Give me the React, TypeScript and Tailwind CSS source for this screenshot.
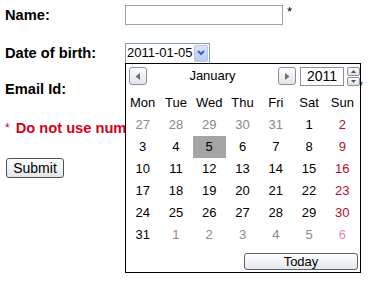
import React from "react";

const font = "font-['Liberation_Sans',Arial,sans-serif]";

type Day = { n: number; other?: boolean };

const weeks: Day[][] = [
  [{ n: 27, other: true }, { n: 28, other: true }, { n: 29, other: true }, { n: 30, other: true }, { n: 31, other: true }, { n: 1 }, { n: 2 }],
  [{ n: 3 }, { n: 4 }, { n: 5 }, { n: 6 }, { n: 7 }, { n: 8 }, { n: 9 }],
  [{ n: 10 }, { n: 11 }, { n: 12 }, { n: 13 }, { n: 14 }, { n: 15 }, { n: 16 }],
  [{ n: 17 }, { n: 18 }, { n: 19 }, { n: 20 }, { n: 21 }, { n: 22 }, { n: 23 }],
  [{ n: 24 }, { n: 25 }, { n: 26 }, { n: 27 }, { n: 28 }, { n: 29 }, { n: 30 }],
  [{ n: 31 }, { n: 1, other: true }, { n: 2, other: true }, { n: 3, other: true }, { n: 4, other: true }, { n: 5, other: true }, { n: 6, other: true }],
];

const dayNames = ["Mon", "Tue", "Wed", "Thu", "Fri", "Sat", "Sun"];

function NavButton({ dir }: { dir: "left" | "right" }) {
  return (
    <button className="h-[18px] w-[18px] rounded-[3px] border border-[#8a8f98] bg-gradient-to-b from-[#fbfcfd] to-[#e1e6ec] grid place-items-center">
      <svg width="6" height="7" viewBox="0 0 6 7">
        {dir === "left" ? <path d="M5 0 L5 7 L0.5 3.5 Z" fill="#6b6f75" /> : <path d="M1 0 L1 7 L5.5 3.5 Z" fill="#6b6f75" />}
      </svg>
    </button>
  );
}

function Calendar() {
  return (
    <div className="absolute left-0 top-[20px] z-10 w-[236px] h-[210px] border border-black bg-white">
      <div className="flex items-center h-[19px] mt-[3px] pl-[3px]">
        <NavButton dir="left" />
        <div className="flex-1 text-center text-[13px] text-black">January</div>
        <NavButton dir="right" />
        <div className="ml-[4px] h-[19px] w-[44px] border border-[#8c9096] text-[14px] leading-[17px] text-center text-black">2011</div>
        <div className="ml-[3px] flex flex-col gap-[1px] w-[13px]">
          <div className="h-[9px] rounded-[2px] border border-[#8a8f98] bg-gradient-to-b from-[#fbfcfd] to-[#dde2e8] grid place-items-center">
            <svg width="5" height="3" viewBox="0 0 5 3"><path d="M0 3 L2.5 0 L5 3 Z" fill="#555" /></svg>
          </div>
          <div className="h-[9px] rounded-[2px] border border-[#8a8f98] bg-gradient-to-b from-[#fbfcfd] to-[#dde2e8] grid place-items-center">
            <svg width="5" height="3" viewBox="0 0 5 3"><path d="M0 0 L2.5 3 L5 0 Z" fill="#555" /></svg>
          </div>
        </div>
      </div>
      <div className="mt-[6px] grid grid-cols-7 w-[233px] text-[13px]">
        {dayNames.map((d) => (
          <div key={d} className="h-[22px] flex items-center justify-center text-black">
            {d}
          </div>
        ))}
        {weeks.flat().map((d, i) => {
          const sunday = i % 7 === 6;
          const color = d.other ? (sunday ? "text-[#e88a9a]" : "text-[#8a8a8a]") : sunday ? "text-[#b0102a]" : "text-black";
          const selected = !d.other && d.n === 5;
          return (
            <div key={i} className={`h-[22px] flex items-center justify-center ${color} ${selected ? "bg-[#a4a4a4]" : ""}`}>
              {d.n}
            </div>
          );
        })}
      </div>
      <div className="flex justify-end pr-[2px] mt-[7px]">
        <button className="h-[17px] w-[114px] rounded-[3px] border border-[#5e6268] bg-gradient-to-b from-white to-[#e4e7ea] text-[13px] leading-[15px] text-black">
          Today
        </button>
      </div>
    </div>
  );
}

export default function App() {
  return (
    <div className={`${font} bg-white w-[379px] h-[285px] overflow-hidden pl-[5px] text-black`}>
      <div className="flex items-center h-[30px]">
        <div className="w-[120px] font-bold text-[14.67px]">Name:</div>
        <div className="h-[20px] w-[158px] border border-[#a0a0a0]" />
        <span className="ml-[4px] text-[13px] -mt-[6px]">*</span>
      </div>
      <div className="flex items-center h-[46px]">
        <div className="w-[120px] font-bold text-[14.67px]">Date of birth:</div>
        <div className="relative">
          <div className="h-[21px] w-[85px] border border-[#7f9db9] flex items-center pl-[1px] pr-[1px]">
            <span className="flex-1 text-[13px]">2011-01-05</span>
            <div className="h-[17px] w-[14px] rounded-[2px] bg-gradient-to-b from-[#dbe5fb] to-[#b9cbf5] border border-[#b3c5ee] grid place-items-center">
              <svg width="8" height="6" viewBox="0 0 8 6"><path d="M1 1 L4 4 L7 1" stroke="#4d61a8" strokeWidth="2" fill="none" /></svg>
            </div>
          </div>
          <Calendar />
        </div>
      </div>
      <div className="flex items-center h-[26px]">
        <div className="w-[120px] font-bold text-[14.67px]">Email Id:</div>
        <div className="h-[20px] w-[229px] border border-[#a0a0a0]" />
        <span className="ml-[4px] text-[13px] -mt-[6px]">*</span>
      </div>
      <div className="flex items-center h-[52px] text-[#d0021b]">
        <span className="text-[12px] mr-[6px]">*</span>
        <span className="font-bold text-[14.67px] whitespace-nowrap">Do not use numbers or special characters</span>
      </div>
      <div className="flex items-center h-[28px]">
        <button className="ml-[1px] h-[20px] w-[58px] rounded-[3px] border border-[#4d5157] bg-gradient-to-b from-white to-[#e3e6e9] text-[14px] leading-[16px]">
          Submit
        </button>
      </div>
    </div>
  );
}
